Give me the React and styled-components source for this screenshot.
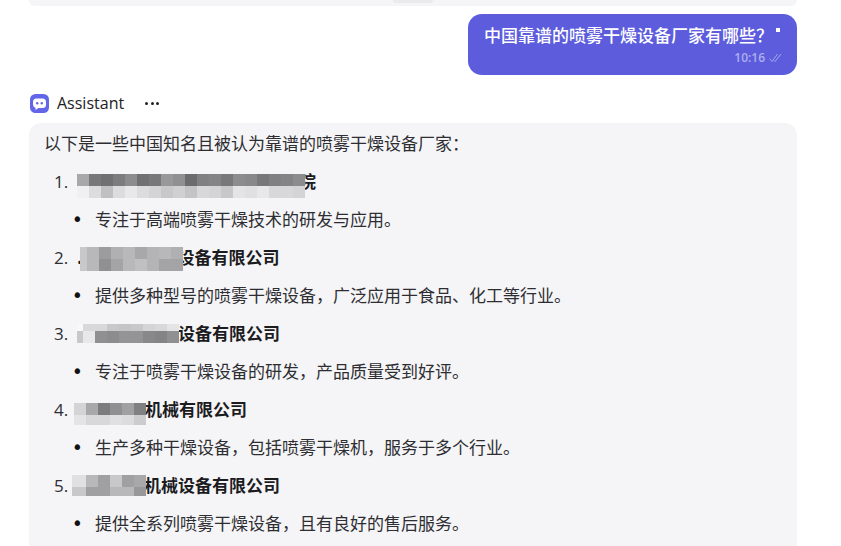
import React from 'react';
import styled, { createGlobalStyle } from 'styled-components';

const items = [{
    pre: '',
    redacted: 229,
    top: 3,
    left: 0,
    rows: [
        { h: 12, cells: ['#a8a8aa', '#78787a', '#707072', '#7c7c7e', '#8c8c8e', '#707072', '#78787a', '#98989a', '#909092', '#6c6c6e', '#808082', '#848486', '#78787a', '#8c8c8e', '#88888a', '#78787a', '#808082', '#848486', '#8c8c8e'] },
        { h: 12, cells: ['#f0f0f2', '#dcdcde', '#c0c0c2', '#dcdcde', '#e8e8ea', '#dcdcde', '#d4d4d6', '#c8c8ca', '#d0d0d2', '#c4c4c6', '#d8d8da', '#d4d4d6', '#c8c8ca', '#e4e4e6', '#e0e0e2', '#e8e8ea', '#d8d8da', '#d8d8da', '#d4d4d6'] },
    ],
    first: 12,
    tail: '院',
    tailOverlap: true,
    desc: '专注于高端喷雾干燥技术的研发与应用。',
}, {
    pre: '.',
    redacted: 95,
    top: 0,
    left: -3,
    rows: [
        { h: 12, cells: ['#c8c8ca', '#b8b8ba', '#9c9c9e', '#b0b0b2', '#b8b8ba', '#a8a8aa', '#b4b4b6', '#b8b8ba', '#b0b0b2'] },
        { h: 12, cells: ['#c8c8ca', '#b8b8ba', '#909092', '#a4a4a6', '#b8b8ba', '#c0c0c2', '#b4b4b6', '#a4a4a6', '#a4a4a6'] },
    ],
    first: 7,
    tail: '设备有限公司',
    desc: '提供多种型号的喷雾干燥设备，广泛应用于食品、化工等行业。',
}, {
    pre: '',
    redacted: 101,
    top: 1,
    left: 0,
    rows: [
        { h: 7, cells: ['#f8f8fa', '#d8d8da', '#d8d8da', '#c8c8ca', '#c4c4c6', '#c8c8ca', '#d4d4d6', '#d8d8da', '#e4e4e6'] },
        { h: 12, cells: ['#c8c8ca', '#e8e8ea', '#909092', '#8c8c8e', '#949496', '#949496', '#88888a', '#848486', '#909092'] },
    ],
    first: 6,
    tail: '设备有限公司',
    desc: '专注于喷雾干燥设备的研发，产品质量受到好评。',
}, {
    pre: '',
    redacted: 68,
    top: 4,
    left: -3,
    rows: [
        { h: 12, cells: ['#d4d4d6', '#a8a8aa', '#7c7c7e', '#909092', '#a0a0a2', '#808082'] },
        { h: 10, cells: ['#e4e4e6', '#d8d8da', '#d8d8da', '#e0e0e2', '#dcdcde', '#cccccE'] },
    ],
    first: 12,
    tail: '机械有限公司',
    desc: '生产多种干燥设备，包括喷雾干燥机，服务于多个行业。',
}, {
    pre: '',
    redacted: 67,
    top: 0,
    left: -5,
    rows: [
        { h: 12, cells: ['#e0e0e2', '#b8b8ba', '#a0a0a2', '#c8c8ca', '#a0a0a2', '#a8a8aa'] },
        { h: 9, cells: ['#c8c8ca', '#a0a0a2', '#a0a0a2', '#b8b8ba', '#b8b8ba', '#98989a'] },
    ],
    first: 14,
    tail: '机械设备有限公司',
    desc: '提供全系列喷雾干燥设备，且有良好的售后服务。',
}];

const GlobalStyle = createGlobalStyle`
    html, body {
        margin: 0;
        padding: 0;
        background: #fff;
    }
`;

const Page = styled.div`
    width: 841px;
    height: 546px;
    overflow: hidden;
    padding-left: 29px;
    box-sizing: border-box;
    font-family: "Noto Sans CJK SC", "Open Sans", sans-serif;
    color: #2e2e32;
`;

const Column = styled.div`
    width: 768px;
    display: flex;
    flex-direction: column;
`;

const PreviousPanel = styled.div`
    height: 6px;
    background: #f5f5f7;
    border-radius: 0 0 12px 12px;
    display: flex;
    justify-content: center;
`;

const PreviousPill = styled.div`
    width: 40px;
    height: 3px;
    background: #ebebee;
    border-radius: 0 0 10px 10px;
`;

const UserBubble = styled.div`
    align-self: flex-end;
    width: 329px;
    height: 61px;
    margin-top: 8px;
    box-sizing: border-box;
    padding: 8px 16px;
    background: #5c5cdd;
    border-radius: 14px;
    color: #fff;
`;

const BubbleText = styled.div`
    font-size: 17px;
    line-height: 26px;
    font-weight: 500;
    white-space: nowrap;
`;

const Cursor = styled.span`
    display: inline-block;
    width: 4px;
    height: 4px;
    margin-left: 3px;
    vertical-align: 10px;
    background: #fff;
`;

const BubbleMeta = styled.div`
    display: flex;
    justify-content: flex-end;
    align-items: center;
    gap: 4px;
    margin-top: 2px;
    margin-right: -1px;
    font-family: "Open Sans", sans-serif;
    font-size: 12px;
    line-height: 16px;
    font-weight: 600;
    color: rgba(255, 255, 255, 0.5);
`;

const AssistantRow = styled.div`
    display: flex;
    align-items: center;
    height: 20px;
    margin-top: 18px;
    padding-left: 1px;
    font-family: "Open Sans", sans-serif;
    font-size: 16px;
`;

const AssistantName = styled.span`
    margin-left: 8px;
    color: #222;
`;

const MoreDots = styled.span`
    display: flex;
    gap: 2.5px;
    margin-left: 21px;
    & > i {
        width: 3px;
        height: 3px;
        border-radius: 50%;
        background: #222;
    }
`;

const Panel = styled.div`
    margin-top: 10px;
    height: 440px;
    box-sizing: border-box;
    padding: 8px 16px;
    background: #f5f5f7;
    border-radius: 12px 12px 0 0;
    font-size: 17px;
    line-height: 24px;
`;

const Intro = styled.p`
    margin: 0 0 14px -1px;
`;

const Ordered = styled.ol`
    margin: 0;
    padding: 0 0 0 32px;
    list-style: decimal;
    & > li::marker {
        font-family: "Open Sans", sans-serif;
        font-size: 17px;
        content: counter(list-item) ".\\00a0\\00a0";
    }
`;

const Item = styled.li`
    margin-bottom: 14px;
`;

const Title = styled.div`
    font-weight: 700;
    white-space: nowrap;
    color: #1c1c1f;
`;

const Redacted = styled.span`
    display: inline-block;
    position: relative;
    width: ${p => p.$width}px;
    height: 1em;
    vertical-align: baseline;
`;

const Mosaic = styled.span`
    position: absolute;
    z-index: 1;
    left: ${p => p.$left}px;
    top: ${p => p.$top}px;
    display: flex;
    flex-direction: column;
`;

const MosaicRow = styled.span`
    display: flex;
    height: ${p => p.$height}px;
`;

const MosaicCell = styled.span`
    display: block;
    flex: none;
    width: ${p => p.$width}px;
    background: ${p => p.$color};
`;

const Tail = styled.span`
    margin-left: ${p => (p.$overlap ? -7 : 0)}px;
`;

const Bullets = styled.ul`
    margin: 14px 0 0;
    padding: 0 0 0 18px;
    list-style: disc;
    & > li::marker {
        font-family: "DejaVu Sans", sans-serif;
        font-size: 19px;
        color: #111;
        content: "•\\00a0\\00a0";
    }
`;

const BotIcon = () => (
    <svg width="19" height="19" viewBox="0 0 19 19">
        <rect width="19" height="19" rx="5.5" fill="#6366e8" />
        <path d="M6.5 4.5h6a3.5 3.5 0 0 1 3.5 3.5v2.5a3.5 3.5 0 0 1-3.5 3.5H8.5L5.5 16v-2.300A3.500 3.500 0 0 1 3 10.500V8a3.500 3.500 0 0 1 3.500-3.500z" fill="#fff" />
        <circle cx="7.200" cy="9.200" r="1.200" fill="#6366e8" />
        <circle cx="11.800" cy="9.200" r="1.200" fill="#6366e8" />
    </svg>
);

const DoubleCheck = () => (
    <svg width="13" height="10" viewBox="0 0 13 10" fill="none" stroke="rgba(255,255,255,0.5)" strokeWidth="0.9">
        <path d="M0.500 5.500 3 8.500 8.500 1" />
        <path d="M5 7.500 6 8.500 12 1" />
    </svg>
);

const App = () => (
    <Page>
        <GlobalStyle />
        <Column>
            <PreviousPanel>
                <PreviousPill />
            </PreviousPanel>
            <UserBubble>
                <BubbleText>中国靠谱的喷雾干燥设备厂家有哪些？<Cursor /></BubbleText>
                <BubbleMeta>
                    <span>10:16</span>
                    <DoubleCheck />
                </BubbleMeta>
            </UserBubble>
            <AssistantRow>
                <BotIcon />
                <AssistantName>Assistant</AssistantName>
                <MoreDots><i /><i /><i /></MoreDots>
            </AssistantRow>
            <Panel>
                <Intro>以下是一些中国知名且被认为靠谱的喷雾干燥设备厂家：</Intro>
                <Ordered>
                    {items.map((item, i) => (
                        <Item key={i}>
                            <Title>
                                {item.pre}
                                <Redacted $width={item.redacted}>
                                    <Mosaic $left={item.left} $top={item.top}>
                                        {item.rows.map((row, r) => (
                                            <MosaicRow key={r} $height={row.h}>
                                                {row.cells.map((color, c) => (
                                                    <MosaicCell key={c} $width={c === 0 ? item.first : 12} $color={color} />
                                                ))}
                                            </MosaicRow>
                                        ))}
                                    </Mosaic>
                                </Redacted>
                                <Tail $overlap={item.tailOverlap}>{item.tail}</Tail>
                            </Title>
                            <Bullets>
                                <li>{item.desc}</li>
                            </Bullets>
                        </Item>
                    ))}
                </Ordered>
            </Panel>
        </Column>
    </Page>
);

export default App;
